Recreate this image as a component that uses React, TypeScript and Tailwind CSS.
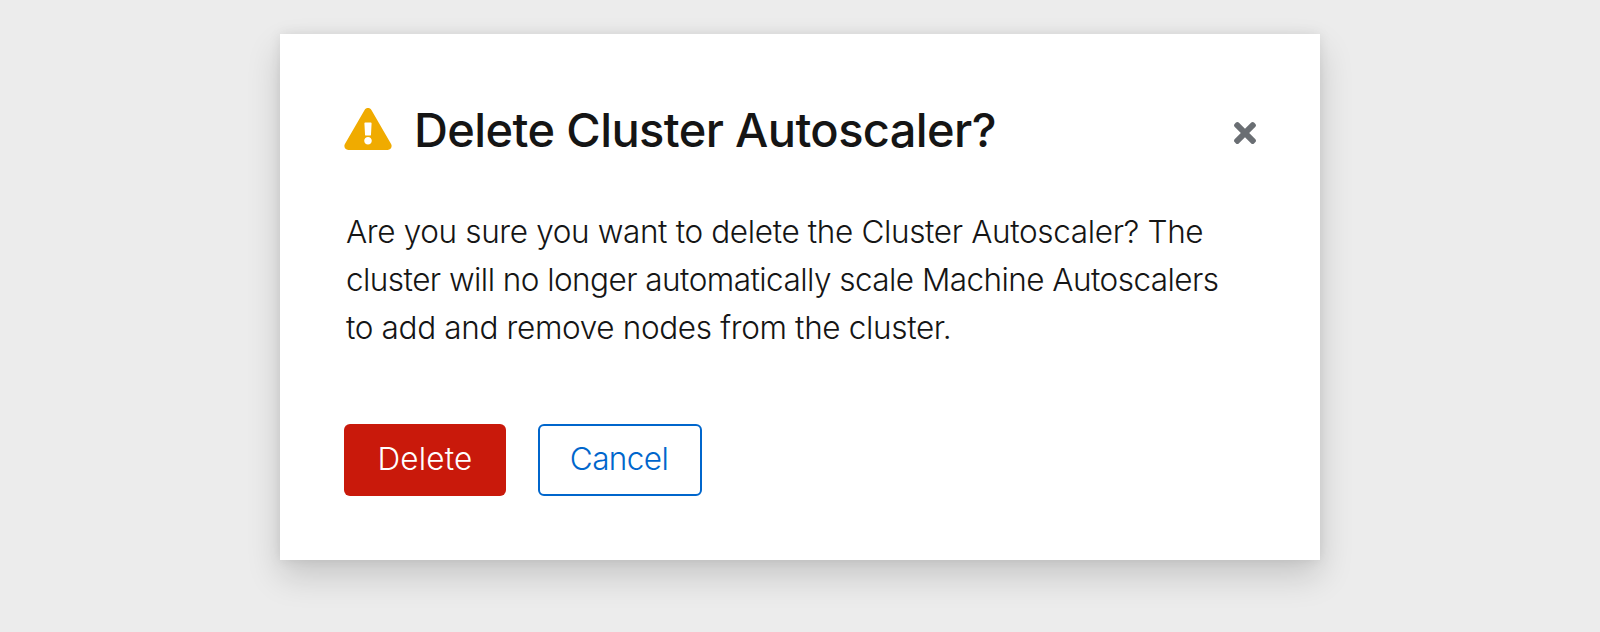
import { FaExclamationTriangle, FaTimes } from "react-icons/fa";

export default function App() {
  return (
    <div className="flex h-[632px] w-[1600px] items-start justify-center overflow-hidden bg-[#ececec] pt-[34px] font-['Inter',sans-serif] text-[#151515]">
      <div
        role="dialog"
        className="flex h-[526px] w-[1040px] flex-col bg-white px-16 pt-16 shadow-[0_16px_32px_rgba(3,3,3,0.16),0_0_12px_rgba(3,3,3,0.08)]"
      >
        <header className="flex h-[70px] items-center">
          <FaExclamationTriangle className="h-[42px] w-12 shrink-0 -translate-y-1 text-[#f0ab00]" />
          <h1 className="-mt-1.5 ml-[22px] whitespace-nowrap text-[47px] leading-[64px] font-medium tracking-[-0.62px]">
            Delete Cluster Autoscaler?
          </h1>
          <button aria-label="Close" className="ml-auto text-[#6a6e73]">
            <FaTimes className="h-8 w-[22px]" />
          </button>
        </header>
        <div className="mt-10 flex flex-col pl-0.5 text-[31.5px] font-light leading-[48px] whitespace-nowrap">
          <span className="tracking-[-0.36px]">Are you sure you want to delete the Cluster Autoscaler? The</span>
          <span className="tracking-[-0.55px]">cluster will no longer automatically scale Machine Autoscalers</span>
          <span className="tracking-[-0.35px]">to add and remove nodes from the cluster.</span>
        </div>
        <div className="mt-[72px] flex gap-8 text-[31.5px] font-light leading-[48px]">
          <button className="h-[72px] w-[162px] rounded-md bg-[#c9190b] pb-0.5 tracking-[0.2px] text-white">Delete</button>
          <button className="h-[72px] w-[164px] rounded-md border-2 border-[#0066cc] pr-0.5 pb-0.5 tracking-[-0.6px] text-[#0066cc]">Cancel</button>
        </div>
      </div>
    </div>
  );
}
